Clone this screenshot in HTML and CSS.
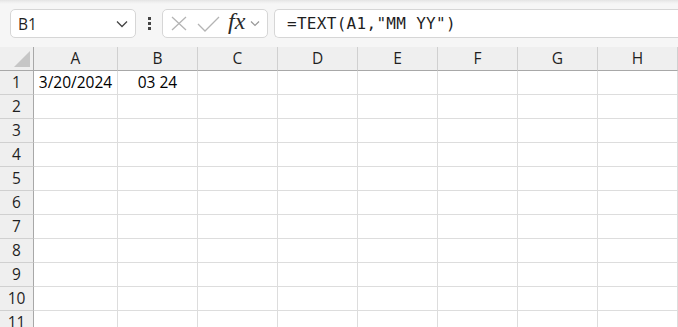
FILE: index.html
```html
<!DOCTYPE html>
<html lang="en">
<head>
    <meta charset="UTF-8">
    <title>TEXT MM YY</title>
    <link rel="stylesheet" href="styles.css">
</head>
<body>
    <div class="toolbar">
        <div class="namebox">
            <span class="ref">B1</span>
            <svg class="chev" width="12" height="8" viewBox="0 0 12 8"><path d="M1 1.5 L6 6.5 L11 1.5" fill="none" stroke="#444" stroke-width="1.3"/></svg>
        </div>
        <div class="dots"><i></i><i></i><i></i></div>
        <div class="fxbox">
            <svg width="16" height="15" viewBox="0 0 16 15"><path d="M1 1 L15 14 M15 1 L1 14" stroke="#b4b4b4" stroke-width="1.3" fill="none"/></svg>
            <svg width="23" height="16" viewBox="0 0 23 16"><path d="M1 8 L8 15 L22 1" stroke="#b4b4b4" stroke-width="1.3" fill="none"/></svg>
            <span class="fx">fx</span>
            <svg width="10" height="7" viewBox="0 0 10 7"><path d="M1 1.5 L5 5.5 L9 1.5" fill="none" stroke="#999" stroke-width="1.2"/></svg>
        </div>
        <div class="formula">=TEXT(A1,"MM YY")</div>
    </div>

    <div class="sheet">
        <div class="corner"><span class="tri"></span></div>
        <div class="colhead">A</div>
        <div class="colhead">B</div>
        <div class="colhead">C</div>
        <div class="colhead">D</div>
        <div class="colhead">E</div>
        <div class="colhead">F</div>
        <div class="colhead">G</div>
        <div class="colhead">H</div>
    </div>
    <div id="rows"></div>

    <script>
        let rows = document.getElementById("rows");
        for (let r = 1; r <= 11; r++) {
            let row = document.createElement("div");
            row.className = "sheet";
            let html = '<div class="rowhead">' + r + '</div>';
            for (let c = 0; c < 8; c++) {
                let text = "";
                if (r === 1 && c === 0) text = "3/20/2024";
                if (r === 1 && c === 1) text = "03 24";
                html += '<div class="cell">' + text + '</div>';
            }
            row.innerHTML = html;
            rows.appendChild(row);
        }
    </script>
</body>
</html>
```

FILE: styles.css
```css
body {
    margin: 0;
    padding: 0;
    width: 678px;
    height: 327px;
    overflow: hidden;
    background-color: #ffffff;
    font-family: 'Open Sans', 'Noto Sans', sans-serif;
    color: #1f1f1f;
}

.toolbar {
    height: 47px;
    box-sizing: border-box;
    background: linear-gradient(#e4e4e4 0, #efefef 2px, #f6f6f6 4px, #f6f6f6 100%);
    display: flex;
    align-items: flex-start;
    padding-top: 9px;
}

.namebox {
    margin-left: 10px;
    width: 126px;
    height: 29px;
    box-sizing: border-box;
    background-color: #ffffff;
    border: 1px solid #d6d6d6;
    border-radius: 5px;
    display: flex;
    align-items: center;
    justify-content: space-between;
    padding: 0 7px 0 7px;
}

.ref {
    font-size: 15.5px;
}

.dots {
    width: 26px;
    height: 29px;
    display: flex;
    flex-direction: column;
    align-items: center;
    justify-content: center;
    gap: 2px;
}

.dots i {
    display: block;
    width: 3px;
    height: 3px;
    background-color: #444;
}

.fxbox {
    width: 106px;
    height: 29px;
    box-sizing: border-box;
    background-color: #ffffff;
    border: 1px solid #d6d6d6;
    border-radius: 5px;
    display: flex;
    align-items: center;
    padding-left: 8px;
}

.fxbox svg:nth-child(2) {
    margin-left: 10px;
}

.fx {
    font-family: 'Liberation Serif', serif;
    font-style: italic;
    font-size: 24px;
    color: #2a2a2a;
    margin-left: 8px;
    margin-top: -4px;
}

.fxbox svg:last-child {
    margin-left: 5px;
}

.formula {
    margin-left: 6px;
    flex: 1;
    height: 29px;
    box-sizing: border-box;
    background-color: #ffffff;
    border: 1px solid #d6d6d6;
    border-right: none;
    border-radius: 5px 0 0 5px;
    font-family: 'DejaVu Sans Mono', monospace;
    font-size: 16px;
    letter-spacing: 0.3px;
    line-height: 27px;
    padding-left: 12px;
    color: #1f1f1f;
}

.sheet {
    display: grid;
    grid-template-columns: 34px 84px repeat(7, 80px);
    height: 24px;
}

.corner,
.colhead,
.rowhead,
.cell {
    box-sizing: border-box;
    height: 24px;
    font-size: 15.5px;
    line-height: 23px;
    text-align: center;
}

.corner {
    position: relative;
    background-color: #efefef;
    border-right: 1px solid #a8a8a8;
    border-bottom: 1px solid #a8a8a8;
}

.tri {
    position: absolute;
    right: 3px;
    bottom: 3px;
    width: 0;
    height: 0;
    border-left: 16px solid transparent;
    border-bottom: 16px solid #c6c6c6;
}

.colhead {
    background-color: #efefef;
    border-right: 1px solid #d0d0d0;
    border-bottom: 1px solid #a8a8a8;
}

.rowhead {
    background-color: #efefef;
    border-right: 1px solid #a8a8a8;
    border-bottom: 1px solid #d0d0d0;
}

.cell {
    border-right: 1px solid #dddddd;
    border-bottom: 1px solid #dddddd;
    color: #000;
}
```
